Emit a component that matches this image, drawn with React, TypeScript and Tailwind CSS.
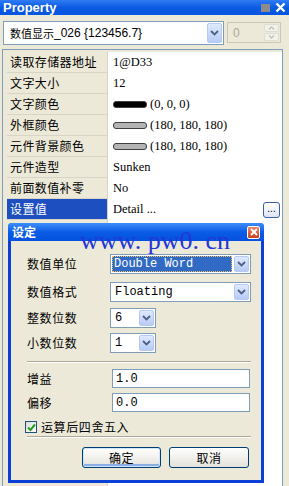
import React from "react";

const CJK = "font-['Noto_Sans_CJK_SC','Noto_Sans',sans-serif]";

function DropBtn() {
  return (
    <div className="w-[15px] h-full shrink-0 rounded-[2px] border border-[#b6c9f2] bg-gradient-to-b from-[#dfe9fe] to-[#b7cbf6] flex items-center justify-center">
      <svg width="9" height="6" viewBox="0 0 9 6">
        <path d="M1 1 L4.5 4.5 L8 1" stroke="#4d6185" strokeWidth="1.8" fill="none" />
      </svg>
    </div>
  );
}

function Select({ w, text, selected }: { w: string; text: string; selected?: boolean }) {
  return (
    <div className={`${w} h-[20px] border border-[#7f9db9] bg-white flex items-stretch p-[1px] gap-[2px]`}>
      <div className="flex-1 flex items-center min-w-0">
        {selected ? (
          <div className="h-full w-full bg-[#316ac5] outline outline-1 outline-dotted outline-[#f0c060] -outline-offset-1 text-white flex items-center pl-[2px] font-['Liberation_Mono',monospace] text-[12px]">
            {text}
          </div>
        ) : (
          <div className="pl-[3px] font-['Liberation_Mono',monospace] text-[12px] text-black">{text}</div>
        )}
      </div>
      <DropBtn />
    </div>
  );
}

function Swatch({ color }: { color: string }) {
  return <div className={`w-[34px] h-[7px] rounded-[3px] border border-[#404040] ${color}`} />;
}

const rows: { label: string; value: string; swatch?: string; selected?: boolean }[] = [
  { label: "读取存储器地址", value: "1@D33" },
  { label: "文字大小", value: "12" },
  { label: "文字颜色", value: "(0, 0, 0)", swatch: "bg-black" },
  { label: "外框颜色", value: "(180, 180, 180)", swatch: "bg-[#b4b4b4]" },
  { label: "元件背景颜色", value: "(180, 180, 180)", swatch: "bg-[#b4b4b4]" },
  { label: "元件造型", value: "Sunken" },
  { label: "前面数值补零", value: "No" },
  { label: "设置值", value: "Detail ...", selected: true },
];

export default function App() {
  return (
    <div className="w-[289px] h-[486px] bg-[#ece9d8] relative overflow-hidden flex flex-col">
      {/* Title bar */}
      <div className="h-[15px] shrink-0 bg-gradient-to-b from-[#2f7cf4] via-[#0a5ae2] to-[#0655e0] flex items-center pl-[3px] pr-[2px]">
        <span className="text-white font-bold text-[13px] leading-none font-['Liberation_Sans',sans-serif]">Property</span>
        <div className="flex-1" />
        <div className="w-[9px] h-[8px] bg-[#8c8c8c] mr-[5px] mt-[1px]" />
        <svg width="11" height="11" viewBox="0 0 11 11" className="mr-[1px]">
          <path d="M1.5 1.5 L9.5 9.5 M9.5 1.5 L1.5 9.5" stroke="white" strokeWidth="2.4" />
        </svg>
      </div>

      {/* Combo row */}
      <div className="flex items-start mt-[6px] pl-[3px] gap-[3px] shrink-0">
        <div className="w-[221px] h-[24px] border border-[#7f9db9] bg-white flex items-stretch p-[1px]">
          <div className="flex-1 flex items-center pl-[5px] text-[12px] text-black">
            <span className={`${CJK} text-[11px]`}>数值显示</span>
            <span className="font-['Liberation_Sans',sans-serif]">_026 {"{"}123456.7{"}"}</span>
          </div>
          <DropBtn />
        </div>
        <div className="w-[54px] h-[21px] mt-[1px] border border-[#c9c7ba] bg-[#ece9d8] flex items-stretch p-[1px]">
          <div className="flex-1 pl-[4px] flex items-center text-[12px] text-[#aca899] font-['Liberation_Sans',sans-serif]">0</div>
          <div className="w-[15px] flex flex-col gap-[1px]">
            <div className="flex-1 rounded-[2px] border border-[#e0ded3] bg-[#f2f1ea] flex items-center justify-center">
              <svg width="7" height="4" viewBox="0 0 7 4"><path d="M1 3.5 L3.5 1 L6 3.5" stroke="#c5c2b2" strokeWidth="1.4" fill="none" /></svg>
            </div>
            <div className="flex-1 rounded-[2px] border border-[#e0ded3] bg-[#f2f1ea] flex items-center justify-center">
              <svg width="7" height="4" viewBox="0 0 7 4"><path d="M1 0.5 L3.5 3 L6 0.5" stroke="#c5c2b2" strokeWidth="1.4" fill="none" /></svg>
            </div>
          </div>
        </div>
      </div>

      {/* Property grid */}
      <div className="mt-[4px] ml-[2px] w-[281px] flex-1 border border-[#7f9db9] border-b-0 flex flex-col min-h-0 pt-[2px]">
        <div className="flex-1 flex flex-col bg-white ml-[4px]">
          {rows.map((r) => (
            <div key={r.label} className="flex h-[21px] shrink-0">
              <div
                className={`w-[101px] shrink-0 flex items-center pl-[3px] border-b border-r border-[#d8d5c6] ${CJK} text-[12px] tracking-[0.4px] ${
                  r.selected ? "bg-[#1e4fc0] text-white" : "bg-[#ece9d8] text-black"
                }`}
              >
                {r.label}
              </div>
              <div className="flex-1 flex items-center pl-[5px] gap-[3px] text-[12.5px] text-black font-['Liberation_Serif',serif] pr-[2px]">
                {r.swatch && <Swatch color={r.swatch} />}
                <span>{r.value}</span>
                {r.selected && (
                  <>
                    <div className="flex-1" />
                    <div className="w-[17px] h-[16px] rounded-[3px] border border-[#3c5fa8] bg-gradient-to-b from-white to-[#dde6f5] flex items-center justify-center text-[10px] leading-none font-['Liberation_Sans',sans-serif] pb-[2px]">
                      ...
                    </div>
                  </>
                )}
              </div>
            </div>
          ))}
          <div className="flex-1 flex">
            <div className="w-[101px] bg-[#ece9d8] border-r border-[#d8d5c6]" />
            <div className="flex-1" />
          </div>
        </div>
      </div>

      {/* Dialog */}
      <div className="absolute left-[8px] top-[223px] w-[256px] h-[260px] flex flex-col rounded-t-[4px] overflow-hidden bg-[#0b3fd6]">
        <div className="h-[18px] shrink-0 bg-gradient-to-b from-[#3d8dfc] via-[#0a5be6] to-[#0452df] flex items-center pl-[4px] pr-[4px]">
          <span className={`${CJK} text-white font-bold text-[12px] leading-none`}>设定</span>
          <div className="flex-1" />
          <div className="w-[13px] h-[13px] rounded-[2px] border border-white bg-gradient-to-b from-[#e8856a] to-[#c8401c] flex items-center justify-center">
            <svg width="8" height="8" viewBox="0 0 8 8">
              <path d="M1 1 L7 7 M7 1 L1 7" stroke="white" strokeWidth="1.8" />
            </svg>
          </div>
        </div>
        <div className="flex-1 mx-[3px] mb-[3px] bg-[#ece9d8] flex flex-col pl-[16px] pr-[10px]">
          <div className="flex items-center mt-[13px]">
            <span className={`w-[83px] ${CJK} text-[12px] tracking-[0.6px]`}>数值单位</span>
            <Select w="w-[141px]" text="Double Word" selected />
          </div>
          <div className="flex items-center mt-[8px]">
            <span className={`w-[83px] ${CJK} text-[12px] tracking-[0.6px]`}>数值格式</span>
            <Select w="w-[141px]" text="Floating" />
          </div>
          <div className="flex items-center mt-[6px]">
            <span className={`w-[83px] ${CJK} text-[12px] tracking-[0.6px]`}>整数位数</span>
            <Select w="w-[46px]" text="6" />
          </div>
          <div className="flex items-center mt-[5px]">
            <span className={`w-[83px] ${CJK} text-[12px] tracking-[0.6px]`}>小数位数</span>
            <Select w="w-[46px]" text="1" />
          </div>
          <div className="mt-[8px] h-[2px] border-t border-[#aca899] border-b border-b-white" />
          <div className="flex items-center mt-[6px]">
            <span className={`w-[85px] ${CJK} text-[12px] tracking-[0.6px]`}>增益</span>
            <div className="w-[138px] h-[19px] border border-[#7f9db9] bg-white flex items-center pl-[3px] font-['Liberation_Mono',monospace] text-[12px]">1.0</div>
          </div>
          <div className="flex items-center mt-[5px]">
            <span className={`w-[85px] ${CJK} text-[12px] tracking-[0.6px]`}>偏移</span>
            <div className="w-[138px] h-[19px] border border-[#7f9db9] bg-white flex items-center pl-[3px] font-['Liberation_Mono',monospace] text-[12px]">0.0</div>
          </div>
          <div className="flex items-center mt-[8px] -ml-[2px] h-[14px]">
            <div className="w-[12px] h-[12px] border border-[#1c5180] bg-gradient-to-br from-[#dcdcd7] to-white flex items-center justify-center">
              <svg width="9" height="9" viewBox="0 0 9 9">
                <path d="M1 4.5 L3.5 7 L8 1.5" stroke="#21a121" strokeWidth="2" fill="none" />
              </svg>
            </div>
            <span className={`ml-[4px] ${CJK} text-[12px] tracking-[0.6px]`}>运算后四舍五入</span>
          </div>
          <div className="mt-[2px] h-[2px] border-t border-[#aca899] border-b border-b-white" />
          <div className="flex justify-end gap-[8px] mt-[9px] pr-[2px]">
            <div className={`w-[79px] h-[21px] rounded-[3px] border border-[#003c74] bg-gradient-to-b from-white to-[#e3e2da] shadow-[inset_0_0_0_1px_#cee7ff,inset_0_-2px_0_1px_#89ade4] flex items-center justify-center ${CJK} text-[12px] tracking-[0.6px]`}>
              确定
            </div>
            <div className={`w-[80px] h-[21px] rounded-[3px] border border-[#003c74] bg-gradient-to-b from-white to-[#e3e2da] flex items-center justify-center ${CJK} text-[12px] tracking-[0.6px]`}>
              取消
            </div>
          </div>
        </div>
      </div>

      {/* Watermark */}
      <div className="absolute left-[80px] top-[228px] text-[26px] leading-none text-[#2336d8] font-['Liberation_Serif',serif] whitespace-pre pointer-events-none">
        www. pw0. cn
      </div>
    </div>
  );
}
